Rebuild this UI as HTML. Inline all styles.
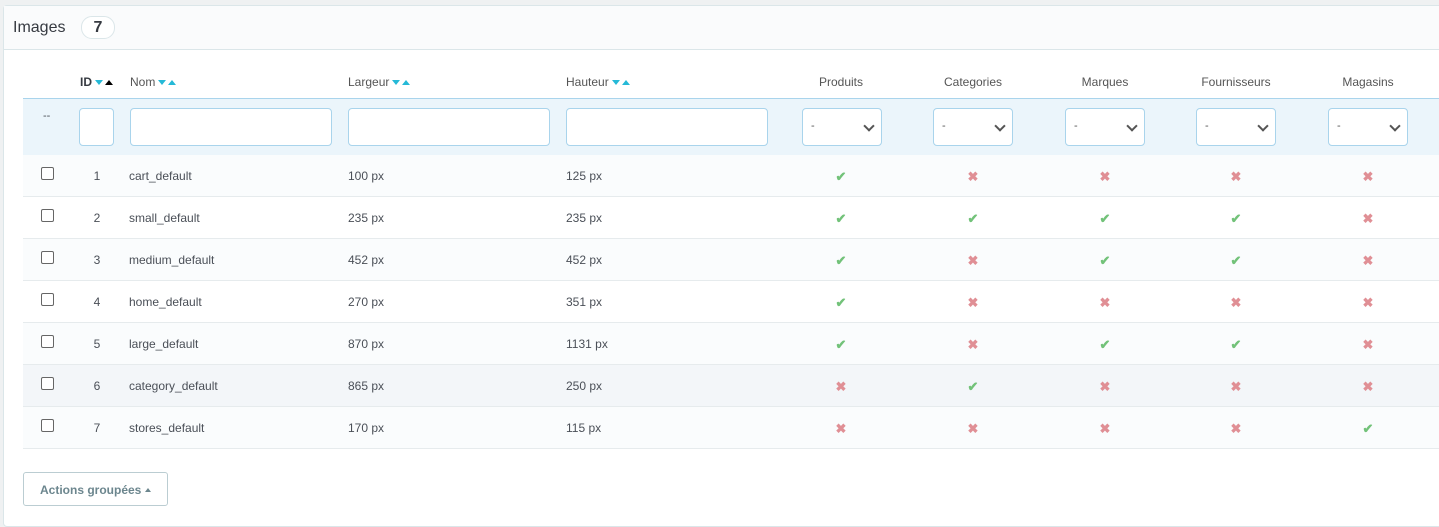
<!DOCTYPE html>
<html><head><meta charset="utf-8"><style>
body{margin:0;width:1439px;height:520px;background:#eff1f2;font-family:"Liberation Sans",sans-serif;color:#4a4f57;overflow:hidden;position:relative;font-size:12px}
.panel{position:absolute;left:3px;top:5px;width:1440px;height:520px;background:#fff;border:1px solid #dbe6e9;border-radius:4px}
.hd{height:43px;background:#fafbfc;border-bottom:1px solid #dbe6e9;position:relative}
.hd .t{position:absolute;left:9px;top:13px;font-size:16px;color:#363a41}
.badge{position:absolute;left:77px;top:10px;width:32px;height:21px;border:1px solid #dbe6e9;border-radius:11px;background:#fff;text-align:center;font-weight:bold;font-size:16px;line-height:21px;color:#363a41}
.a{position:absolute;white-space:nowrap}
.th{top:75px;color:#555;font-size:12px}
.c{transform:translateX(-50%)}
.filter{position:absolute;left:23px;top:98px;width:1416px;height:56px;background:#ebf5fb;border-top:1px solid #a9d4ec;border-bottom:1px solid #a9d4ec}
.in{position:absolute;top:108px;height:38px;background:#fff;border:1px solid #a9d4ec;border-radius:4px;box-sizing:border-box}
.sel{width:80px}
.sel:before{content:"-";position:absolute;left:8px;top:11px;font-size:11px;color:#555}
.sel:after{content:"";position:absolute;right:8px;top:13px;width:6px;height:6px;border-right:2px solid #555;border-bottom:2px solid #555;transform:rotate(45deg)}
.row{position:absolute;left:23px;width:1416px;height:41px;border-bottom:1px solid #e6ebed}
.cb{position:absolute;left:41px;width:11px;height:11px;border:1px solid #666;border-radius:2px;background:#fff}
.ok{color:#72c279;font-size:13px;font-weight:bold}
.no{color:#e08f95;font-size:13px;font-weight:bold}
.up{display:inline-block;width:0;height:0;border-left:4px solid transparent;border-right:4px solid transparent;border-bottom:5px solid #25b9d7;margin-left:2px;vertical-align:1px}
.dn{display:inline-block;width:0;height:0;border-left:4px solid transparent;border-right:4px solid transparent;border-top:5px solid #25b9d7;margin-left:3px;vertical-align:1px}
.btn{position:absolute;left:23px;top:472px;width:145px;height:34px;border:1px solid #bbcdd2;border-radius:3px;background:#fff;box-sizing:border-box;color:#6c868e;font-weight:bold;font-size:12px;line-height:34px;padding-left:16px}
</style></head><body>
<div class="panel"><div class="hd"><span class="t">Images</span><span class="badge">7</span></div></div>
<div class="a th" style="left:80px;font-weight:bold;color:#363a41">ID<span class="dn"></span><span class="up" style="border-bottom-color:#000"></span></div>
<div class="a th" style="left:130px">Nom<span class="dn"></span><span class="up"></span></div>
<div class="a th" style="left:348px">Largeur<span class="dn"></span><span class="up"></span></div>
<div class="a th" style="left:566px">Hauteur<span class="dn"></span><span class="up"></span></div>
<div class="a th c" style="left:841px">Produits</div>
<div class="a th c" style="left:973px">Categories</div>
<div class="a th c" style="left:1105px">Marques</div>
<div class="a th c" style="left:1236px">Fournisseurs</div>
<div class="a th c" style="left:1368px">Magasins</div>
<div class="filter"></div>
<div class="a" style="left:43px;top:110px;font-size:11px">--</div>
<div class="in" style="left:79px;width:35px"></div>
<div class="in" style="left:130px;width:202px"></div>
<div class="in" style="left:348px;width:202px"></div>
<div class="in" style="left:566px;width:202px"></div>
<div class="in sel" style="left:802px"></div>
<div class="in sel" style="left:933px"></div>
<div class="in sel" style="left:1065px"></div>
<div class="in sel" style="left:1196px"></div>
<div class="in sel" style="left:1328px"></div>
<div id="rows"></div>
<div class="btn">Actions groupées <span style="display:inline-block;border-left:3.5px solid transparent;border-right:3.5px solid transparent;border-bottom:4px solid #6c868e;vertical-align:2px"></span></div>
<script>
var d=[[1,"cart_default","100 px","125 px","10000"],[2,"small_default","235 px","235 px","11110"],[3,"medium_default","452 px","452 px","10110"],[4,"home_default","270 px","351 px","10000"],[5,"large_default","870 px","1131 px","10110"],[6,"category_default","865 px","250 px","01000"],[7,"stores_default","170 px","115 px","00001"]];
var xs=[841,973,1105,1236,1368],h="";
d.forEach(function(r,i){var y=155+i*42;var bg=i==5?"#f3f6f9":(i%2==0?"#fafcfd":"#fff");
h+='<div class="row" style="top:'+y+'px;background:'+bg+'"></div>';
h+='<div class="cb" style="top:'+(y+12)+'px"></div>';
h+='<div class="a c" style="left:97px;top:'+(y+14)+'px">'+r[0]+'</div>';
h+='<div class="a" style="left:129px;top:'+(y+14)+'px">'+r[1]+'</div>';
h+='<div class="a" style="left:348px;top:'+(y+14)+'px">'+r[2]+'</div>';
h+='<div class="a" style="left:566px;top:'+(y+14)+'px">'+r[3]+'</div>';
for(var k=0;k<5;k++){var ok=r[4][k]=="1";h+='<div class="a c '+(ok?'ok':'no')+'" style="left:'+xs[k]+'px;top:'+(y+14)+'px">'+(ok?'✔':'✖')+'</div>';}
});
document.getElementById("rows").innerHTML=h;
</script>
</body></html>
